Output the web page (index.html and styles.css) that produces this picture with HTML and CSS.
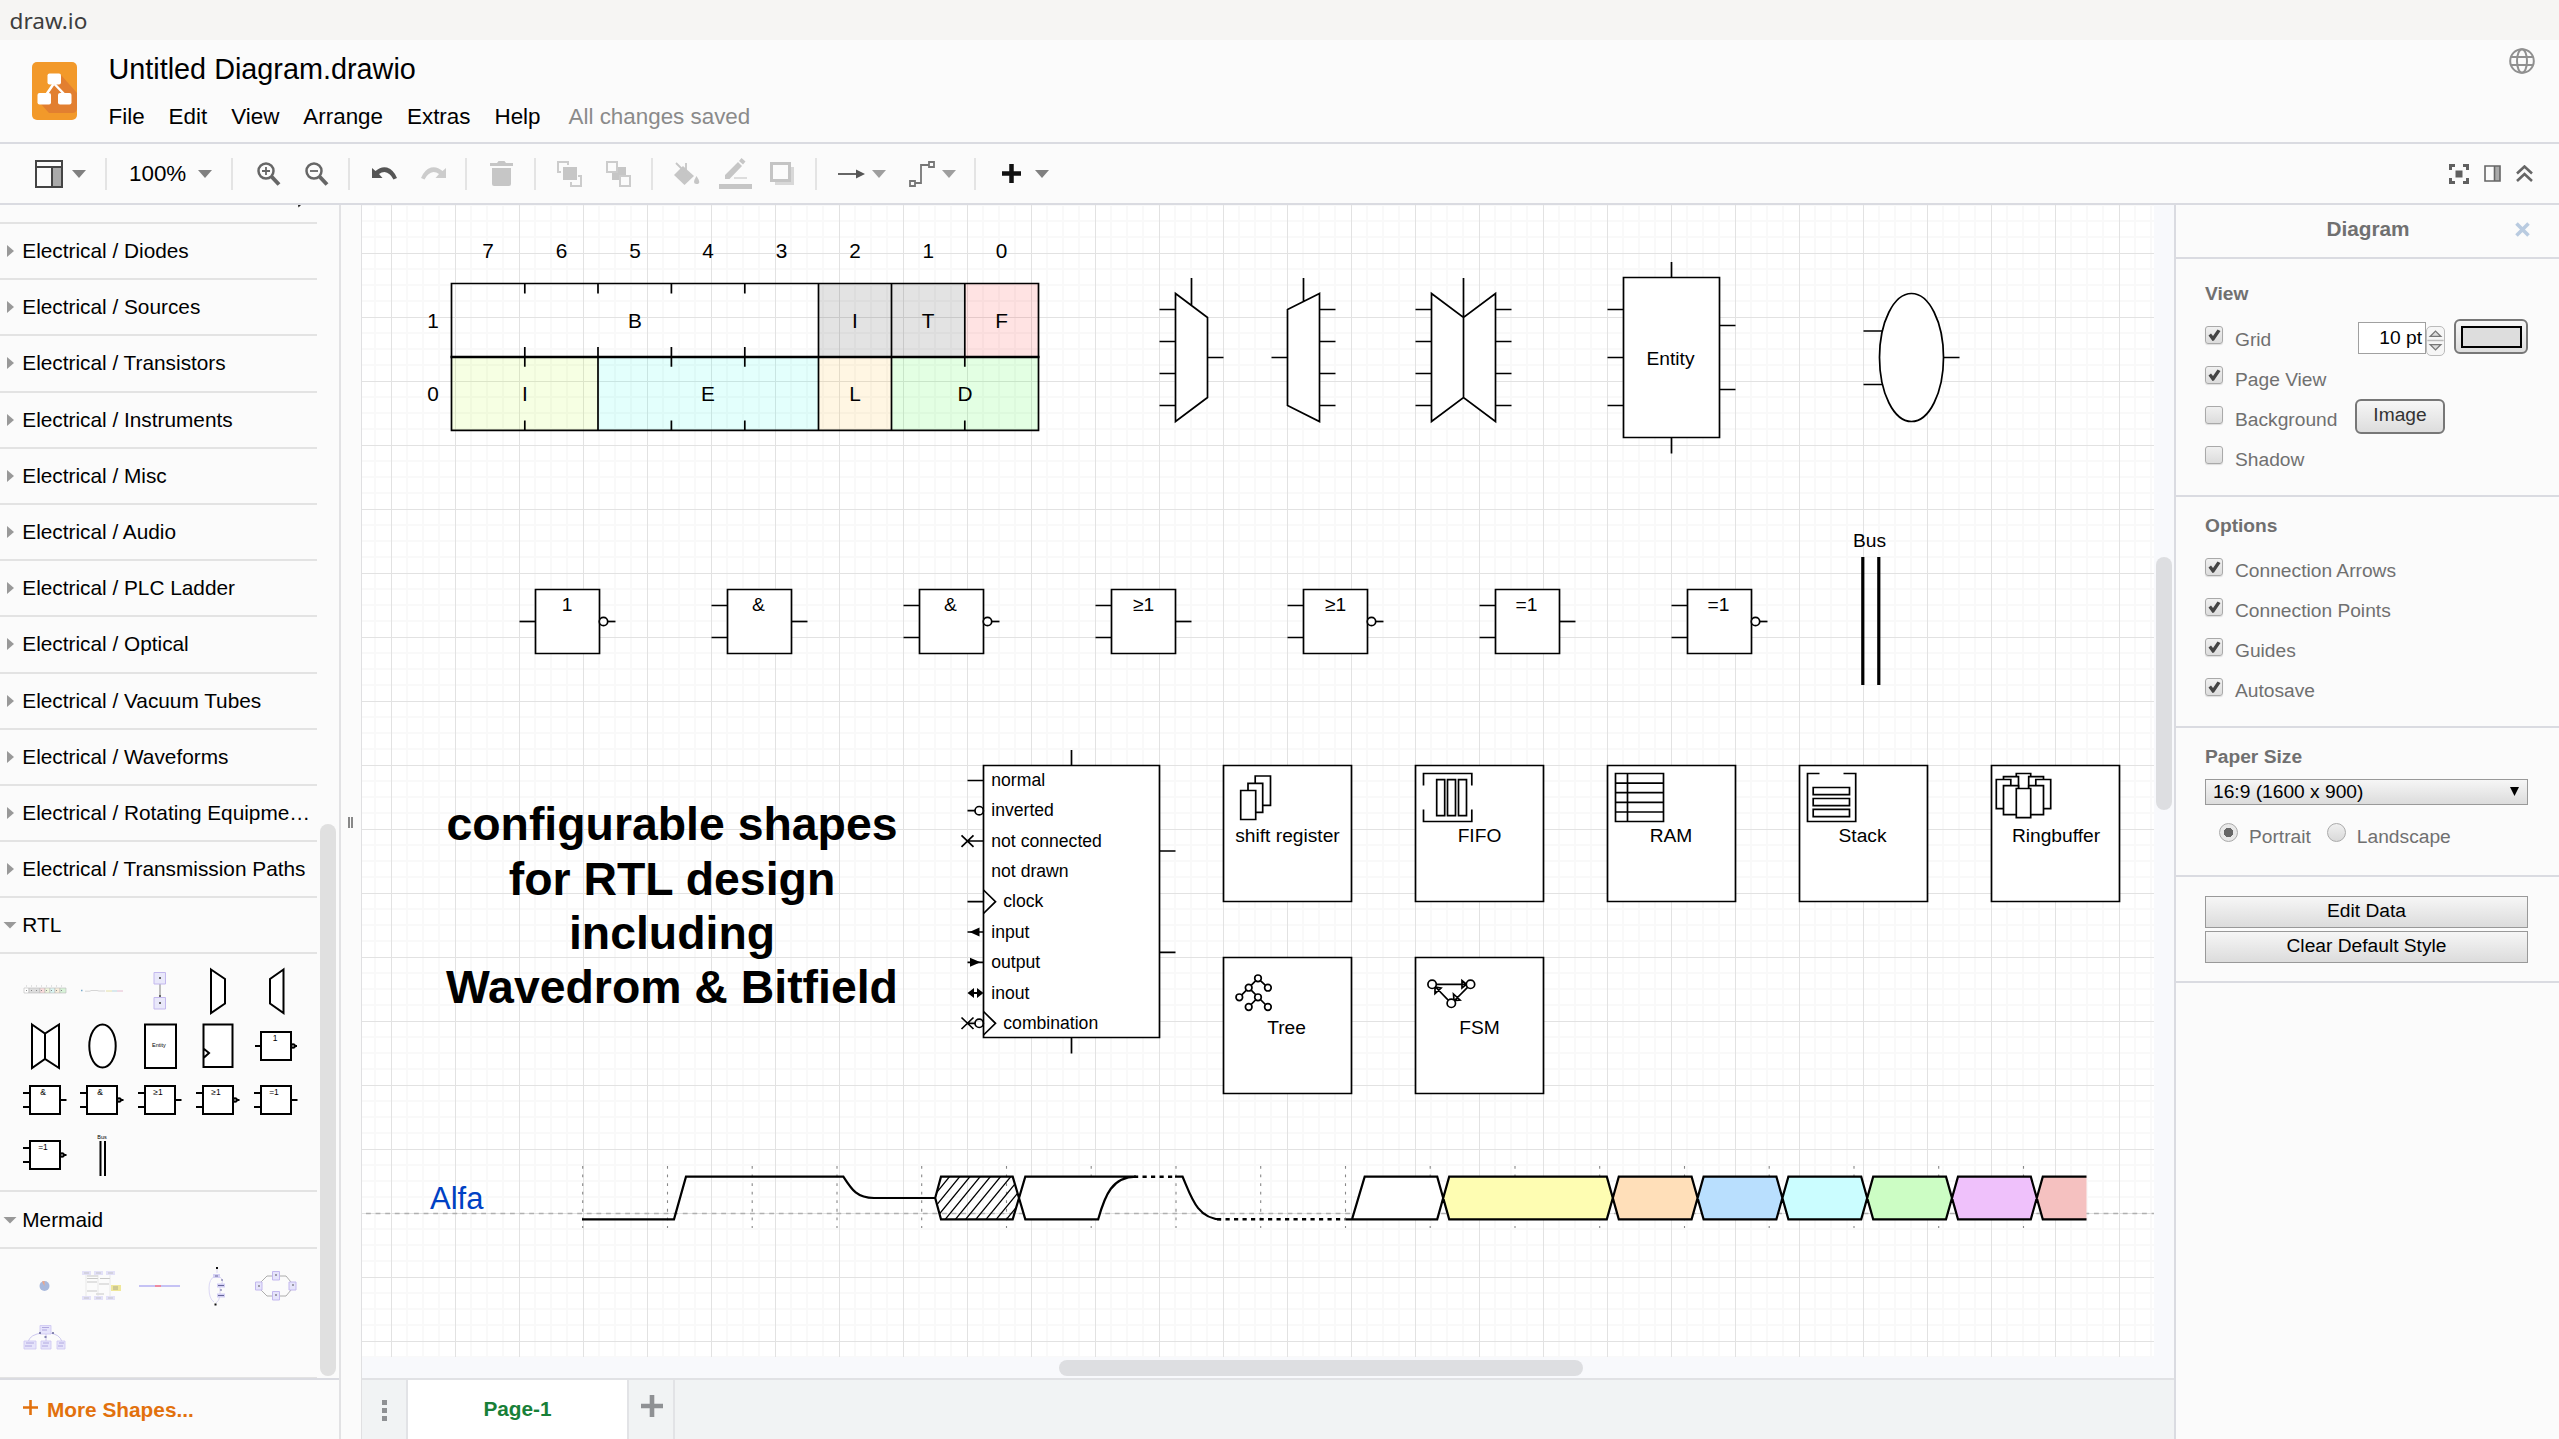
FILE: index.html
```html
<!DOCTYPE html>
<html lang="en">
<head>
<meta charset="utf-8">
<title>draw.io</title>
<link rel="stylesheet" href="styles.css">
</head>
<body>
<svg class="defs" aria-hidden="true">
  <symbol id="check" viewBox="0 0 18 18"><path d="M3.500 9.500L6 7.500L8 10L12.500 3.500L15.500 5L9 14.500L7.500 15Z" fill="#444"/></symbol>
  <symbol id="caret" viewBox="0 0 14 8"><path d="M0 0H14L7 8Z" fill="#808080"/></symbol>
  <symbol id="right" viewBox="0 0 16 12"><path d="M5 0L12 6L5 12Z" fill="#999"/></symbol>
  <symbol id="down" viewBox="0 0 16 12"><path d="M1.500 3H14.500L8 9.500Z" fill="#999"/></symbol>
</svg>

<div class="app">
  <div class="titlebar">draw.io</div>

  <header class="header">
    <svg class="logo" viewBox="0 0 45 58">
      <rect width="45" height="58" rx="5" fill="#f2992a"/>
      <path d="M29 13L45 31V46Q45 51 40 51H17L9 42L22 22Z" fill="#e27f30"/>
      <path d="M21.500 22L14 33M22.500 22L33 33" stroke="#fff" stroke-width="2.500"/>
      <rect x="15.500" y="11.500" width="13.500" height="11" rx="2" fill="#fff"/>
      <rect x="5.500" y="31" width="13.500" height="11.500" rx="2" fill="#fff"/>
      <rect x="26" y="31" width="13.500" height="11.500" rx="2" fill="#fff"/>
    </svg>
    <div class="heading">
      <div class="filename">Untitled Diagram.drawio</div>
      <nav class="menu"><span>File</span><span>Edit</span><span>View</span><span>Arrange</span><span>Extras</span><span>Help</span><span class="status">All changes saved</span></nav>
    </div>
    <svg class="globe" viewBox="0 0 26 26" fill="none" stroke="#909090" stroke-width="2">
      <circle cx="13" cy="13" r="11.800"/><ellipse cx="13" cy="13" rx="5" ry="11.800"/><path d="M2 9H24M2 17H24"/>
    </svg>
  </header>

  <div class="toolbar">
    <div class="group g-format">
      <svg width="28" height="28" viewBox="0 0 28 28"><path d="M18 8H27V27H18Z" fill="#aaa"/><path d="M1 1H27V27H1ZM1 7H27M17 7V27" fill="none" stroke="#444" stroke-width="2"/></svg>
      <svg class="caret"><use href="#caret"/></svg>
    </div>
    <div class="group g-zoom"><span class="percent">100%</span><svg class="caret"><use href="#caret"/></svg></div>
    <div class="group g-mag">
      <svg width="24" height="24" viewBox="0 0 24 24" fill="none" stroke="#666"><circle cx="9" cy="9" r="7.500" stroke-width="2.500"/><path d="M9 5V13M5 9H13" stroke-width="1.800"/><path d="M14 14L22 22.500" stroke-width="4"/></svg>
      <svg width="24" height="24" viewBox="0 0 24 24" fill="none" stroke="#666"><circle cx="9" cy="9" r="7.500" stroke-width="2.500"/><path d="M5 9H13" stroke-width="1.800"/><path d="M14 14L22 22.500" stroke-width="4"/></svg>
    </div>
    <div class="group g-undo">
      <svg width="25" height="16" viewBox="0 0 25 16"><path d="M0 2L3.500 5Q9 0 15 1.500Q22 4 25 12L21.500 13.500Q18 6.500 12.500 6Q9.500 6 7 8L10.500 12H0Z" fill="#555"/></svg>
      <svg width="25" height="16" viewBox="0 0 25 16"><path d="M25 2L21.500 5Q16 0 10 1.500Q3 4 0 12L3.500 13.500Q7 6.500 12.500 6Q15.500 6 18 8L14.500 12H25Z" fill="#ccc"/></svg>
    </div>
    <div class="group g-trash"><svg width="23" height="25" viewBox="0 0 23 25"><path d="M0 2H7L8.500 0H14.500L16 2H23V5H0ZM2 7H21V23Q21 25 19 25H4Q2 25 2 23Z" fill="#c6c6c6"/></svg></div>
    <div class="group g-order">
      <svg width="25" height="26" viewBox="0 0 25 26"><path d="M6 6H20V19H6Z" fill="#c6c6c6"/><path d="M4 11H1V1H11V4M21 15H24V25H14V21" fill="none" stroke="#ccc" stroke-width="2"/></svg>
      <svg width="25" height="26" viewBox="0 0 25 26"><path d="M6 6H20V19H6Z" fill="#c6c6c6"/><path d="M1 1H11V11H1ZM14 15H24V25H14Z" fill="#fbfbfb" stroke="#ccc" stroke-width="2"/></svg>
    </div>
    <div class="group g-style">
      <svg width="26" height="26" viewBox="0 0 26 26"><path d="M9 5L20 15L10.500 24L0 14Z" fill="#c6c6c6"/><path d="M2 2L12 12V2" fill="none" stroke="#c6c6c6" stroke-width="1.800"/><path d="M22.500 15Q28 23 22.500 23Q17.500 23 22.500 15Z" fill="#c6c6c6"/></svg>
      <svg class="pen" width="33" height="31" viewBox="0 0 33 31"><path d="M0 26H33V31H0Z" fill="#c6c6c6"/><path d="M6 21V17L19 4L23 8L10.500 21ZM20 3L22.500 0L26.500 3.500L24 6.500Z" fill="#c6c6c6"/><path d="M15 20H28" stroke="#ddd" stroke-width="2"/></svg>
      <svg width="24" height="24" viewBox="0 0 24 24"><path d="M5 5H24V23H5Z" fill="#d8d8d8"/><rect x="1.500" y="1.500" width="18" height="17" fill="#fbfbfb" stroke="#c4c4c4" stroke-width="3"/></svg>
    </div>
    <div class="group g-conn">
      <svg width="28" height="14" viewBox="0 0 28 14"><path d="M1 7H20" stroke="#666" stroke-width="2"/><path d="M19 2.500L28 7L19 11.500Z" fill="#555"/></svg>
      <svg class="caret light"><use href="#caret"/></svg>
      <svg class="way" width="26" height="26" viewBox="0 0 26 26"><path d="M1 20H6V25H1ZM20 1H25V6H20ZM6 22H12V4H20" fill="none" stroke="#777" stroke-width="1.800"/></svg>
      <svg class="caret light"><use href="#caret"/></svg>
    </div>
    <div class="group g-add">
      <svg width="21" height="21" viewBox="0 0 21 21"><path d="M10.500 1V20M1 10.500H20" stroke="#111" stroke-width="4.500"/></svg>
      <svg class="caret"><use href="#caret"/></svg>
    </div>
    <div class="group g-right">
      <svg width="20" height="20" viewBox="0 0 20 20"><path d="M1.500 6V1.500H6M14 1.500H18.500V6M18.500 14V18.500H14M6 18.500H1.500V14" fill="none" stroke="#606060" stroke-width="3"/><path d="M6.500 6.500H13.500V13.500H6.500Z" fill="#606060"/></svg>
      <svg width="17" height="17" viewBox="0 0 17 17"><path d="M11 1H16V16H11Z" fill="#aaa"/><path d="M1 1H16V16H1ZM10.500 1V16" fill="none" stroke="#666" stroke-width="1.600"/></svg>
      <svg width="17" height="17" viewBox="0 0 17 17"><path d="M1 8.500L8.500 1.500L16 8.500M1 16L8.500 9L16 16" fill="none" stroke="#666" stroke-width="2.600"/></svg>
    </div>
  </div>

  <div class="workspace">
    <aside class="sidebar">
      <div class="shapes">
        <div class="palettes">
          <div class="palette cut"><svg width="4" height="3" viewBox="0 0 4 3"><path d="M1 0H4L1.500 2.500Z" fill="#222"/></svg></div>
          <div class="palette"><svg><use href="#right"/></svg>Electrical / Diodes</div>
          <div class="palette"><svg><use href="#right"/></svg>Electrical / Sources</div>
          <div class="palette"><svg><use href="#right"/></svg>Electrical / Transistors</div>
          <div class="palette"><svg><use href="#right"/></svg>Electrical / Instruments</div>
          <div class="palette"><svg><use href="#right"/></svg>Electrical / Misc</div>
          <div class="palette"><svg><use href="#right"/></svg>Electrical / Audio</div>
          <div class="palette"><svg><use href="#right"/></svg>Electrical / PLC Ladder</div>
          <div class="palette"><svg><use href="#right"/></svg>Electrical / Optical</div>
          <div class="palette"><svg><use href="#right"/></svg>Electrical / Vacuum Tubes</div>
          <div class="palette"><svg><use href="#right"/></svg>Electrical / Waveforms</div>
          <div class="palette"><svg><use href="#right"/></svg>Electrical / Rotating Equipme…</div>
          <div class="palette"><svg><use href="#right"/></svg>Electrical / Transmission Paths</div>
          <div class="palette"><svg><use href="#down"/></svg>RTL</div>
          <div class="thumbs rtl">
            <svg viewBox="0 0 58 54"><g stroke="#bbb" stroke-width=".6"><path d="M8 24H13V29H8Z" fill="#fff"/><path d="M13 24H24V29H13Z" fill="#ddd"/><path d="M24 24H29V29H24Z" fill="#fbdcdc"/><path d="M29 24H34V29H29Z" fill="#eef6dc"/><path d="M34 24H39V29H34Z" fill="#dcf6f3"/><path d="M39 24H44V29H39Z" fill="#f9eedc"/><path d="M44 24H50V29H44Z" fill="#d8f3d8"/></g><path d="M10 22H50" stroke="#bbb" stroke-width=".8" stroke-dasharray="1 4"/><path d="M10 26.500H50" stroke="#888" stroke-dasharray="1 4"/></svg>
            <svg viewBox="0 0 58 54"><path d="M8 26.500H9.500" stroke="#7ac" stroke-width="1.300"/><path d="M12 27.200H17L18 26.500H24L26 27H32" stroke="#d0d0d0" stroke-width=".9" fill="none"/><path d="M33 27H39" stroke="#e4e0a8"/><path d="M39 27H44" stroke="#b5d5df"/><path d="M44 27H50" stroke="#e5bcd0"/></svg>
            <svg viewBox="0 0 58 54"><path d="M29 20V34" stroke="#aaa" stroke-width="1.500"/><path d="M23 8.500H34.500V20H23ZM23 33.500H34.500V45H23Z" fill="#e9e8fa" stroke="#c3b8ee"/><path d="M28 14H30M28 39H30M28 32H30" stroke="#666" stroke-width="2"/></svg>
            <svg viewBox="0 0 58 54"><path d="M22 5.500L36 15V39.500L22 49Z" class="tk"/></svg>
            <svg viewBox="0 0 58 54"><path d="M36.500 5.500L23 15V39.500L36.500 49Z" class="tk"/></svg>
            <svg viewBox="0 0 58 54"><path d="M16 5.500L29 14.500L43 5.500V49L29 40L16 49ZM29 14.500V40" class="tk"/></svg>
            <svg viewBox="0 0 58 54"><ellipse cx="29.500" cy="27" rx="13.200" ry="21.500" class="tk"/></svg>
            <svg viewBox="0 0 58 54"><path d="M14 5.500H45V49H14Z" class="tk"/><text x="28" y="27.500" class="tt tiny">Entity</text></svg>
            <svg viewBox="0 0 58 54"><path d="M14.500 5.500H43.500V48H14.500ZM14.500 29.500L20 34L14.500 39" class="tk"/></svg>
            <svg viewBox="0 0 58 54"><path d="M14 13H44V41H14ZM8 27H14M44 27H50" class="tk"/><circle cx="46" cy="27" r="1.800" class="tk"/><text x="28" y="21.500" class="tt">1</text></svg>
            <svg viewBox="0 0 58 54"><path d="M14 13H44V41H14ZM7 20H14M7 34H14M44 27H50.500" class="tk"/><text x="27" y="21.500" class="tt">&amp;</text></svg>
            <svg viewBox="0 0 58 54"><path d="M14 13H44V41H14ZM7 20H14M7 34H14M44 27H50.500" class="tk"/><circle cx="46" cy="27" r="1.800" class="tk"/><text x="27" y="21.500" class="tt">&amp;</text></svg>
            <svg viewBox="0 0 58 54"><path d="M14 13H44V41H14ZM7 20H14M7 34H14M44 27H50.500" class="tk"/><text x="27" y="21.500" class="tt">≥1</text></svg>
            <svg viewBox="0 0 58 54"><path d="M14 13H44V41H14ZM7 20H14M7 34H14M44 27H50.500" class="tk"/><circle cx="46" cy="27" r="1.800" class="tk"/><text x="27" y="21.500" class="tt">≥1</text></svg>
            <svg viewBox="0 0 58 54"><path d="M14 13H44V41H14ZM7 20H14M7 34H14M44 27H50.500" class="tk"/><text x="27" y="21.500" class="tt">=1</text></svg>
            <svg viewBox="0 0 58 54"><path d="M14 13H44V41H14ZM7 20H14M7 34H14M44 27H50.500" class="tk"/><circle cx="46" cy="27" r="1.800" class="tk"/><text x="27" y="21.500" class="tt">=1</text></svg>
            <svg viewBox="0 0 58 54"><path d="M27.500 13V48M32 13V48" class="tk"/><text x="29" y="10.500" class="tt tiny">Bus</text></svg>
          </div>
          <div class="palette"><svg><use href="#down"/></svg>Mermaid</div>
          <div class="thumbs mermaid">
            <svg viewBox="0 0 58 54"><circle cx="28.500" cy="27" r="5" fill="#a9b9dc"/><path d="M28.500 27L26 22.500L28.500 22Z" fill="#f3a683"/></svg>
            <svg viewBox="0 0 58 54"><path d="M9 14H18M21 14H30M33 14H42M9 39H18M21 39H30M33 39H42" stroke="#e3e1f8" stroke-width="4"/><path d="M11 14H16M23 14H28M35 14H40M11 39H16M23 39H28M35 39H40M14 17H25M14 19.500H25M27 19.500H37M14 23H24M26 25H36M14 32H24M23 35H31" stroke="#bbb" stroke-width=".8"/><path d="M13 16V37M25 16V37M37 16V37" stroke="#ddd" stroke-width=".6"/><path d="M38 26H48V32H38Z" fill="#efe79a"/><path d="M40 28H45M40 30H45" stroke="#998" stroke-width=".8"/></svg>
            <svg viewBox="0 0 58 54"><path d="M8 27H24M30 27H49" stroke="#b4b0f2" stroke-width="1.600"/><path d="M24 27H30" stroke="#ee8aa0" stroke-width="2"/></svg>
            <svg viewBox="0 0 58 54"><path d="M28 10V14M26 17Q20 20 20 29Q20 40 25 43M31 18Q36 22 31 27V37Q30 42 27 44" stroke="#dcd8f5" fill="none"/><path d="M24 17H31M28 26.500H36M28 36.500H36" stroke="#d3cff4" stroke-width="4"/><path d="M27 9H29M25.500 45.500H27.500" stroke="#111" stroke-width="2"/><path d="M26 17H29M29 26.500H35M29 36.500H35M32 21H34M31 31H33" stroke="#669"/></svg>
            <svg viewBox="0 0 58 54"><path d="M14 23L20 17H39L44 23M14 31L20 37H39L44 31" stroke="#999" fill="none" stroke-width=".8"/><path d="M25.500 12.500H32.500V21H25.500ZM25.500 32.500H32.500V41H25.500ZM8.500 23H15V31H8.500ZM42 23H49V31H42Z" fill="#e6e4fb" stroke="#c3b8ee"/><path d="M28 16H30M28 36H30M11 27H13M45 26H47" stroke="#555"/></svg>
            <svg viewBox="0 0 58 54"><path d="M27 20Q14 21 12 29M30 20V29M33 20Q44 21 46 29" stroke="#cdc8f0" fill="none"/><path d="M24 12.500H35V21H24ZM8 28H20V36H8ZM25 28H35V36H25ZM41 28H49V36H41Z" fill="#e6e4fb" stroke="#cdc5f2" stroke-width=".8"/><path d="M26 14.500H33M26 17H31M10 30H18M9 33H16M27 30H33M26 33H32M43 30H48M42 33H47" stroke="#aaa0dd" stroke-width=".9"/><path d="M23 20H25M28.500 24H30.500M36 20H38" stroke="#669" stroke-width="1.500"/></svg>
          </div>
        </div>
        <div class="scrolltrack"><div class="thumb-v left-thumb"></div></div>
      </div>
      <div class="more"><svg width="15" height="15" viewBox="0 0 15 15"><path d="M7.500 0V15M0 7.500H15" stroke="#e2710d" stroke-width="2.600"/></svg>More Shapes...</div>
    </aside>

    <div class="splitter"><i></i><i></i></div>

    <main class="editor">
      <div class="viewport">
        <svg class="canvas" viewBox="362 205 1792 1152" width="1792" height="1152">
          <defs>
            <pattern id="grid" x="391" y="253" width="64" height="64" patternUnits="userSpaceOnUse">
              <path d="M15 0h2v64h-2zM31 0h2v64h-2zM47 0h2v64h-2zM0 15h64v2H0zM0 31h64v2H0zM0 47h64v2H0z" fill="#f9f9f9"/>
              <path d="M0 0h64v1H0zM0 0h1v64H0z" fill="#e2e2e2"/>
            </pattern>
            <clipPath id="hex"><path d="M935.200 1198L941 1176.700H1012.700L1019.600 1198L1012.700 1219.300H941Z"/></clipPath>
            <g id="box"><path class="s" d="M0 0H64V64H0Z"/></g>
            <g id="in2"><path class="s" d="M-16 16H0M-16 48H0"/></g>
            <g id="out"><path class="s" d="M64 32H80"/></g>
            <g id="nout"><path class="s" d="M72 32H80"/><circle class="s" cx="68" cy="32" r="4.200"/></g>
            <g id="mem"><path class="s" d="M0 0H128V136H0Z"/></g>
          </defs>
          <rect x="362" y="205" width="1792" height="1152" fill="#fff"/>
          <rect x="362" y="205" width="1792" height="1152" fill="url(#grid)"/>
          <path d="M366 1213.500H2154" stroke="#b0b0b0" stroke-width="1.400" stroke-dasharray="4.800 4.800"/>

          <!-- bit field -->
          <path d="M818 283.500H964.800V357H818Z" fill="#000" opacity=".11"/>
          <path d="M964.800 283.500H1038.400V357H964.800Z" fill="#f00" opacity=".11"/>
          <path d="M451.200 357H598V430.300H451.200Z" fill="#af0" opacity=".11"/>
          <path d="M598 357H818V430.300H598Z" fill="#00ffe1" opacity=".11"/>
          <path d="M818 357H891.500V430.300H818Z" fill="#fa0" opacity=".11"/>
          <path d="M891.500 357H1038.400V430.300H891.500Z" fill="#0f0" opacity=".11"/>
          <path class="n" d="M451.500 283.500H1038.500V430.300H451.500ZM818.500 283.500V430.300M891.500 283.500V430.300M964.800 283.500V357M598 357V430.300M524.800 283.500V293.500M598 283.500V293.500M671.400 283.500V293.500M744.800 283.500V293.500M524.800 347V366.700M598 347V357M671.400 347V366.700M744.800 347V366.700M524.800 420.500V430M671.400 420.500V430M744.800 420.500V430M964.800 357V366.700M964.800 420.500V430"/>
          <path class="n" stroke-width="2.400" d="M450.500 357H1039.500"/>
          <g class="bits">
            <text x="488" y="258">7</text><text x="561.500" y="258">6</text><text x="635" y="258">5</text><text x="708" y="258">4</text><text x="781.500" y="258">3</text><text x="855" y="258">2</text><text x="928.200" y="258">1</text><text x="1001.600" y="258">0</text>
            <text x="433" y="328">1</text><text x="433" y="401">0</text>
            <text x="635" y="328">B</text><text x="855" y="328">I</text><text x="928.200" y="328">T</text><text x="1001.600" y="328">F</text>
            <text x="525" y="401">I</text><text x="708" y="401">E</text><text x="855" y="401">L</text><text x="965" y="401">D</text>
          </g>

          <!-- multiplexers, entity, cloud -->
          <path class="s" d="M1175.500 293.500L1207.500 317.500V397.500L1175.500 421.500ZM1159.500 309.500H1175.500M1159.500 341.500H1175.500M1159.500 373.500H1175.500M1159.500 405.500H1175.500M1191.500 278V305.500M1207.500 357.500H1223.500"/>
          <path class="s" d="M1319.500 293.500L1287.500 309.500V405.500L1319.500 421.500ZM1319.500 309.500H1335.500M1319.500 341.500H1335.500M1319.500 373.500H1335.500M1319.500 405.500H1335.500M1303.500 278V301.500M1271.500 357.500H1287.500"/>
          <path class="s" d="M1431.500 293.500L1463.500 317.500L1495.500 293.500V421.500L1463.500 397.500L1431.500 421.500ZM1463.500 278V397.500M1415.500 309.500H1431.500M1415.500 341.500H1431.500M1415.500 373.500H1431.500M1415.500 405.500H1431.500M1495.500 309.500H1511.500M1495.500 341.500H1511.500M1495.500 373.500H1511.500M1495.500 405.500H1511.500"/>
          <path class="s" d="M1623.500 277.500H1719.500V437.500H1623.500ZM1671.500 262V277.500M1671.500 437.500V453.500M1607.500 309.500H1623.500M1607.500 357.500H1623.500M1607.500 405.500H1623.500M1719.500 325.500H1735.500M1719.500 389.500H1735.500"/>
          <text class="m" x="1670.500" y="365">Entity</text>
          <path class="s" d="M1863.500 331H1884M1863.500 384.500H1884M1943.500 357.500H1959.500"/>
          <ellipse class="s" cx="1911.500" cy="357.500" rx="32" ry="64"/>

          <!-- logic gates -->
          <g transform="translate(535.500 589.500)"><use href="#box"/><path class="s" d="M-16 32H0"/><use href="#nout"/><text class="m" x="31.500" y="21.500">1</text></g>
          <g transform="translate(727.500 589.500)"><use href="#box"/><use href="#in2"/><use href="#out"/><text class="m" x="31" y="21.500">&amp;</text></g>
          <g transform="translate(919.500 589.500)"><use href="#box"/><use href="#in2"/><use href="#nout"/><text class="m" x="31" y="21.500">&amp;</text></g>
          <g transform="translate(1111.500 589.500)"><use href="#box"/><use href="#in2"/><use href="#out"/><text class="m" x="32" y="21.500">≥1</text></g>
          <g transform="translate(1303.500 589.500)"><use href="#box"/><use href="#in2"/><use href="#nout"/><text class="m" x="32" y="21.500">≥1</text></g>
          <g transform="translate(1495.500 589.500)"><use href="#box"/><use href="#in2"/><use href="#out"/><text class="m" x="31" y="21.500">=1</text></g>
          <g transform="translate(1687.500 589.500)"><use href="#box"/><use href="#in2"/><use href="#nout"/><text class="m" x="31" y="21.500">=1</text></g>
          <text class="m" x="1869.500" y="547">Bus</text>
          <path class="n" stroke-width="3.200" d="M1862.800 557V685M1878.800 557V685"/>

          <!-- caption -->
          <g class="caption"><text x="672" y="840">configurable shapes</text><text x="672" y="895">for RTL design</text><text x="672" y="949">including</text><text x="672" y="1003">Wavedrom &amp; Bitfield</text></g>

          <!-- pin styles -->
          <path class="s" d="M983.500 765.500H1159.500V1037.500H983.500ZM1071.500 750V765.500M1071.500 1037.500V1053.500M1159.500 851H1175.500M1159.500 952.300H1175.500"/>
          <path class="n" d="M967.500 780.500H983.500M967.500 810.700H975M961.500 835.300L973.500 846.800M973.500 835.300L961.500 846.800M967 841H983.500M967.500 901.700H983.500M983.500 890L995.500 901.700L983.500 913.500M967.500 932H983.500M967.500 962.300H983.500M961.500 1017.500L973.500 1029M973.500 1017.500L961.500 1029M967 1023.300H975M983.500 1011.500L995.500 1023.300L983.500 1035"/>
          <circle class="n" cx="979.200" cy="810.700" r="4.200"/><circle class="n" cx="979.200" cy="1023.300" r="4.200"/>
          <path d="M969.500 932L979.500 927.500V936.500ZM970 957.800V966.800L980.500 962.300ZM967.500 993L974 988V998ZM983.500 993L977 988V998ZM974 992H977V994H974Z"/>
          <g class="pins">
            <text x="991.300" y="786.300">normal</text><text x="991.300" y="816.300">inverted</text><text x="991.300" y="847">not connected</text><text x="991.300" y="877">not drawn</text><text x="1003.300" y="907.300">clock</text><text x="991.300" y="938">input</text><text x="991.300" y="968">output</text><text x="991.300" y="999">inout</text><text x="1003.300" y="1029">combination</text>
          </g>

          <!-- memories -->
          <use href="#mem" x="1223.500" y="765.500"/><use href="#mem" x="1415.500" y="765.500"/><use href="#mem" x="1607.500" y="765.500"/><use href="#mem" x="1799.500" y="765.500"/><use href="#mem" x="1991.500" y="765.500"/><use href="#mem" x="1223.500" y="957.500"/><use href="#mem" x="1415.500" y="957.500"/>
          <text class="m" x="1287.500" y="842">shift register</text><text class="m" x="1479.500" y="842">FIFO</text><text class="m" x="1671" y="842">RAM</text><text class="m" x="1862.500" y="842">Stack</text><text class="m" x="2056" y="842">Ringbuffer</text><text class="m" x="1286.500" y="1034">Tree</text><text class="m" x="1479.500" y="1034">FSM</text>
          <path class="s" d="M1255.200 776H1270.500V805.300H1255.200Z"/><path class="s" d="M1248 783.300H1262.700V812.300H1248Z"/><path class="s" d="M1240.700 790.500H1255.700V819.500H1240.700Z"/>
          <path class="n" d="M1423.500 785.500V773.500H1471.800V785.500M1423.500 809.500V821.500H1471.800V809.500M1436.700 779.700H1444.700V815.700H1436.700ZM1447.500 779.700H1455.500V815.700H1447.500ZM1458.500 779.700H1466.500V815.700H1458.500Z"/>
          <path class="n" d="M1615.500 773.500H1663.500V821.500H1615.500ZM1627.500 773.500V821.500M1615.500 783.200H1663.500M1615.500 792.700H1663.500M1615.500 802.300H1663.500M1615.500 812H1663.500"/>
          <path class="n" d="M1819.500 773.500H1807.500V821.500H1855.700V773.500H1843.500M1813.200 787.500H1849.500V794.700H1813.200ZM1813.200 798.500H1849.500V805.700H1813.200ZM1813.200 809.300H1849.500V816.700H1813.200Z"/>
          <path class="s" d="M2016.300 773.500H2030.700V802.700H2016.300Z"/><path class="s" d="M2003.500 776.700H2018.500V806H2003.500ZM2028.700 776.700H2043.500V806H2028.700Z"/><path class="s" d="M1996.300 779.500H2010.800V808.700H1996.300ZM2035.800 779.500H2050.700V808.700H2035.800Z"/><path class="s" d="M2003.500 785.700H2018.500V814.700H2003.500ZM2028.700 785.700H2043.500V814.700H2028.700Z"/><path class="s" d="M2016.300 788.500H2030.700V817.700H2016.300Z"/>
          <path class="n" d="M1258 978.300L1239.300 997.300M1258 978.300L1267.900 987.700M1248.700 987.700L1267.900 1007M1258 997.300L1248.700 1007"/>
          <g class="s"><circle cx="1258" cy="978.300" r="3.300"/><circle cx="1248.700" cy="987.700" r="3.300"/><circle cx="1267.900" cy="987.700" r="3.300"/><circle cx="1239.300" cy="997.300" r="3.300"/><circle cx="1258" cy="997.300" r="3.300"/><circle cx="1248.700" cy="1007" r="3.300"/><circle cx="1267.900" cy="1007" r="3.300"/></g>
          <path class="n" d="M1432 984.300H1466M1470.500 984.300L1455 1000M1451.300 1003.300L1436 987.500M1462 980.500V988L1466.500 984.300ZM1453.500 994L1460 1000L1454 1000.500ZM1435 993.500L1441 988L1435 987Z"/>
          <g class="s"><circle cx="1432.100" cy="984.300" r="4.200"/><circle cx="1470.500" cy="984.300" r="4.200"/><circle cx="1451.300" cy="1003.300" r="4.200"/></g>

          <!-- timing diagram -->
          <path d="M582.700 1166V1228M667.500 1166V1228M752.200 1166V1228M837 1166V1228M921.700 1166V1228M1006.500 1166V1228M1091.200 1166V1228M1176 1166V1228M1260.700 1166V1228M1345.500 1166V1228M1430.200 1166V1228M1515 1166V1228M1599.700 1166V1228M1684.500 1166V1228M1769.200 1166V1228M1854 1166V1228M1938.700 1166V1228M2023.500 1166V1228" stroke="#888" stroke-width="1.100" stroke-dasharray="2.800 5.770"/>
          <text x="430" y="1209" font-size="31" fill="#0041c4">Alfa</text>
          <g fill="#fff">
            <path d="M1019.600 1198L1025.300 1176.700H1136Q1116 1177 1107 1196Q1103 1206 1098 1219.300H1025.300Z"/>
            <path d="M1352 1219.300L1364.700 1176.700H1437.200L1443.200 1198L1437.200 1219.300Z"/>
            <path d="M1443.200 1198L1449.200 1176.700H1606.800L1612.800 1198L1606.800 1219.300H1449.200Z" fill="#fefdb2"/>
            <path d="M1612.800 1198L1618.800 1176.700H1691.600L1697.600 1198L1691.600 1219.300H1618.800Z" fill="#ffdfb9"/>
            <path d="M1697.600 1198L1703.600 1176.700H1776.400L1782.400 1198L1776.400 1219.300H1703.600Z" fill="#b9dffe"/>
            <path d="M1782.400 1198L1788.400 1176.700H1861.200L1867.200 1198L1861.200 1219.300H1788.400Z" fill="#cbfdff"/>
            <path d="M1867.200 1198L1873.200 1176.700H1946L1952 1198L1946 1219.300H1873.200Z" fill="#ccfdc4"/>
            <path d="M1952 1198L1958 1176.700H2030.800L2036.800 1198L2030.800 1219.300H1958Z" fill="#efc1fb"/>
            <path d="M2036.800 1198L2042.800 1176.700H2086.500V1219.300H2042.800Z" fill="#f5c1c0"/>
          </g>
          <path clip-path="url(#hex)" class="n" stroke-width="1.300" d="M910 1225L955 1170M920.200 1225L965.200 1170M930.400 1225L975.400 1170M940.600 1225L985.600 1170M950.800 1225L995.800 1170M961 1225L1006 1170M971.200 1225L1016.200 1170M981.400 1225L1026.400 1170M991.600 1225L1036.600 1170M1001.800 1225L1046.800 1170M899.800 1225L944.800 1170"/>
          <path class="n" stroke-width="2.200" d="M582 1219.300H674L686 1176.700H843.400C852 1190 857 1198 874 1198H935.200L941 1176.700H1012.700L1025.300 1219.300H1098.200C1105 1195 1112 1177 1136 1176.700M935.200 1198L941 1219.300H1012.700L1025.300 1176.700H1136M1175 1176.700H1182.600C1191 1196 1197 1219 1221 1219.300M1345.500 1219.300H1352L1364.700 1176.700H1437.200L1449.200 1219.300H1606.800L1618.800 1176.700H1691.600L1703.600 1219.300H1776.400L1788.400 1176.700H1861.200L1873.200 1219.300H1946L1958 1176.700H2030.800L2042.800 1219.300H2086.500M1352 1219.300H1437.200L1449.200 1176.700H1606.800L1618.800 1219.300H1691.600L1703.600 1176.700H1776.400L1788.400 1219.300H1861.200L1873.200 1176.700H1946L1958 1219.300H2030.800L2042.800 1176.700H2086.500"/>
          <path class="n" stroke-width="2.400" stroke-dasharray="4.200 4.300" d="M1134 1176.700H1176M1217 1219.300H1345"/>
        </svg>
        <div class="vtrack"><div class="thumb-v canvas-thumb"></div></div>
        <div class="htrack"><div class="thumb-h"></div></div>
      </div>
      <div class="tabs">
        <div class="dots"><i></i><i></i><i></i></div>
        <div class="tab">Page-1</div>
        <div class="addtab"><svg width="22" height="22" viewBox="0 0 22 22"><path d="M11 0V22M0 11H22" stroke="#8f9194" stroke-width="4.600"/></svg></div>
      </div>
    </main>

    <aside class="format">
      <div class="format-title"><span>Diagram</span><svg width="15" height="15" viewBox="0 0 15 15"><path d="M1.500 1.500L13.500 13.500M13.500 1.500L1.500 13.500" stroke="#b9cbe0" stroke-width="3.600"/></svg></div>
      <section class="view">
        <h3>View</h3>
        <div class="row"><span class="cb"><svg><use href="#check"/></svg></span>Grid
          <span class="size">10 pt</span>
          <span class="spin"><svg viewBox="0 0 18 30"><path d="M3 10.500L9 4.500L15 10.500ZM3 19.500L9 25.500L15 19.500Z" fill="#ddd" stroke="#777" stroke-width="1.400"/><path d="M0 15H18" stroke="#bbb" stroke-width="1.600"/></svg></span>
          <span class="color"><i></i></span></div>
        <div class="row"><span class="cb"><svg><use href="#check"/></svg></span>Page View</div>
        <div class="row"><span class="cb"></span>Background<span class="imagebtn">Image</span></div>
        <div class="row"><span class="cb"></span>Shadow</div>
      </section>
      <section class="options">
        <h3>Options</h3>
        <div class="row"><span class="cb"><svg><use href="#check"/></svg></span>Connection Arrows</div>
        <div class="row"><span class="cb"><svg><use href="#check"/></svg></span>Connection Points</div>
        <div class="row"><span class="cb"><svg><use href="#check"/></svg></span>Guides</div>
        <div class="row"><span class="cb"><svg><use href="#check"/></svg></span>Autosave</div>
      </section>
      <section class="paper">
        <h3>Paper Size</h3>
        <div class="select"><span>16:9 (1600 x 900)</span><svg width="9" height="9" viewBox="0 0 9 9"><path d="M0 0H9L4.500 9Z"/></svg></div>
        <div class="row radios"><span class="radio on"></span><span class="portrait">Portrait</span><span class="radio"></span><span>Landscape</span></div>
      </section>
      <section class="actions"><div class="btn">Edit Data</div><div class="btn">Clear Default Style</div></section>
    </aside>
  </div>
</div>
</body>
</html>
```
FILE: styles.css
```css
* { box-sizing: border-box; }
body { margin: 0; background: #fbfbfb; font-family: "Liberation Sans", Arial, sans-serif; color: #000; overflow: hidden; }
svg { display: block; flex: none; }
.defs { display: none; }
.app { width: 2559px; height: 1439px; display: flex; flex-direction: column; }

.titlebar { height: 40px; background: #f6f5f3; padding-left: 9.500px; font: 22.600px/41px "Noto Sans", sans-serif; color: #3d3d3d; }

.header { height: 104px; border-bottom: 2px solid #dadbe1; display: flex; padding: 22px 24px 0 32px; }
.logo { width: 45px; height: 58px; }
.heading { margin-left: 31.500px; flex: 1; margin-top: -10px; }
.filename { font-size: 28.800px; line-height: 34px; }
.menu { display: flex; gap: 24px; font-size: 22.400px; line-height: 26px; margin-top: 18px; }
.status { color: #8a8a8a; margin-left: 4px; }
.globe { width: 26px; height: 26px; margin-top: -14px; }

.toolbar { height: 61px; border-bottom: 2px solid #dadbe1; display: flex; align-items: center; }
.group { height: 32px; display: flex; align-items: center; border-right: 2px solid #e4e4e4; }
.caret { width: 14px; height: 8px; }
.light { opacity: .75; }
.g-format { width: 107px; padding-left: 35px; gap: 9px; }
.g-zoom { width: 126px; padding-left: 22px; gap: 11.500px; }
.percent { font-size: 22.400px; line-height: 28px; width: 57px; padding-top: 1px; }
.g-mag { width: 117px; padding-left: 24px; gap: 24px; }
.g-undo { width: 117px; padding-left: 22px; gap: 24px; }
.g-trash { width: 69px; padding-left: 23px; }
.g-order { width: 117px; padding-left: 21px; gap: 24px; }
.g-style { width: 164px; padding-left: 21px; gap: 18.500px; }
.g-conn { width: 159px; padding-left: 20px; gap: 7px; }
.way { margin-left: 16px; }
.g-add { padding-left: 24.500px; gap: 13px; border: 0; }
.g-right { margin-left: auto; padding-right: 26px; gap: 15px; border: 0; }

.workspace { flex: 1; display: flex; min-height: 0; }
.sidebar { width: 341px; border-right: 2px solid #e2e2e4; display: flex; flex-direction: column; }
.shapes { height: 1175px; border-bottom: 2px solid #dadbe1; display: flex; overflow: hidden; }
.palettes { width: 317px; }
.palette { height: 56.200px; border-bottom: 2px solid #e3e3e3; display: flex; align-items: center; font-size: 20.800px; white-space: nowrap; padding-left: 1.500px; gap: 4.800px; }
.palette svg { width: 16px; height: 12px; }
.palette.cut { height: 19px; padding-left: 297px; align-items: flex-start; }
.palette.cut svg { width: 4px; height: 3px; }
.thumbs { display: grid; grid-template-columns: repeat(5, 57.800px); grid-auto-rows: 54.500px; padding-left: 15.500px; border-bottom: 2px solid #e3e3e3; }
.thumbs svg { width: 58px; height: 54px; }
.rtl { height: 238px; padding-top: 10px; }
.mermaid { height: 130px; padding-top: 10px; }
.tk { fill: #fff; stroke: #000; stroke-width: 2; }
.tt { font-size: 8.500px; text-anchor: middle; }
.tiny { font-size: 5.500px; }
.scrolltrack { flex: 1; padding: 619px 3px 0; }
.thumb-v { width: 16px; border-radius: 8px; background: #e0e0e0; }
.left-thumb { height: 552px; }
.more { flex: 1; display: flex; align-items: center; gap: 9px; padding-left: 23px; color: #e2710d; font-weight: bold; font-size: 20.800px; }
.more svg { margin-bottom: 5px; }

.splitter { width: 21px; border-right: 1px solid #e0e0e2; display: flex; gap: 1px; padding: 612px 0 0 7px; }
.splitter i { width: 2px; height: 11px; background: #888; }

.editor { width: 1812px; display: flex; flex-direction: column; }
.viewport { height: 1175px; border-bottom: 2px solid #e1e2e5; background: #f8f9fc; display: grid; grid-template: 1152px 21px / 1792px 20px; }
.canvas { grid-area: 1 / 1; }
.canvas .s { fill: #fff; stroke: #000; stroke-width: 1.700; }
.canvas .n { fill: none; stroke: #000; }
.canvas .n:not([stroke-width]) { stroke-width: 1.700; }
.canvas text { font-family: "Liberation Sans", Arial, sans-serif; }
.m { font-size: 19.200px; text-anchor: middle; }
.bits text { font-size: 20.800px; text-anchor: middle; }
.pins text { font-size: 17.600px; }
.caption text { font-size: 46.400px; font-weight: bold; text-anchor: middle; }
.vtrack { padding: 352px 2px 0; }
.canvas-thumb { height: 253px; background: #dddee1; }
.htrack { padding: 3px 0 0 697px; }
.thumb-h { width: 524px; height: 16px; border-radius: 8px; background: #dddee1; }
.tabs { flex: 1; background: #f1f3f4; display: flex; }
.dots { width: 46px; border-right: 2px solid #e2e3e6; display: flex; flex-direction: column; gap: 3px; align-items: center; padding: 20px 0 0 1px; }
.dots i { width: 5px; height: 5px; background: #8f9194; }
.tab { width: 219px; background: #fff; color: #188038; font-weight: bold; font-size: 20.800px; line-height: 57px; text-align: center; }
.addtab { width: 48px; border: solid #e2e3e6; border-width: 0 2px; padding: 15px 0 0 12px; }

.format { flex: 1; border-left: 2px solid #dadbe1; font-size: 19.200px; color: #707070; }
.format-title { height: 54px; border-bottom: 2px solid #dadbe1; display: flex; align-items: center; font-weight: bold; font-size: 20.800px; padding: 0 29px 3px 29px; }
.format-title span { flex: 1; text-align: center; padding: 0 0 1px 16px; }
section { border-bottom: 2px solid #dadbe1; padding: 18px 31px 0 29px; }
h3 { font-size: 19.200px; line-height: 22px; margin: 0 0 14px; }
.view { height: 238px; padding-top: 24px; }
.view h3 { margin-bottom: 15px; }
.view .cb { margin-bottom: 10px; }
.options { height: 231px; }
.paper { height: 149px; }
.paper h3 { margin-bottom: 11px; }
.row { height: 40px; display: flex; align-items: center; white-space: nowrap; }
.cb { width: 18px; height: 18px; margin: 0 12px 8px 0; border: 1.600px solid #a9a9a9; border-radius: 3px; background: linear-gradient(#f0f0f0, #dcdcdc); box-shadow: 0 1px 1px #ddd; }
.cb svg { width: 18px; height: 18px; margin: -1px; }
.size { width: 68px; height: 32px; margin: 0 0 4px auto; border: 1px solid #a0a0a0; background: #fff; color: #000; text-align: right; padding-right: 3px; line-height: 29px; }
.spin { width: 19px; height: 30px; margin-top: 1px; border: 1.600px solid #bbb; border-radius: 5px; background: #f6f6f6; }
.spin svg { width: 17px; height: 27px; }
.color { width: 74px; height: 35px; margin: 0 0 7px 9px; border: 2px solid #777; border-radius: 6px; background: linear-gradient(#f6f6f6, #ddd); padding: 5px; }
.color i { display: block; width: 61px; height: 22px; border: 2px solid #000; background: #ddd; }
.imagebtn { width: 90px; height: 35px; margin: 0 83px 7px auto; border: 2px solid #777; border-radius: 6px; background: linear-gradient(#f6f6f6, #ddd); color: #333; text-align: center; line-height: 27px; }
.select { height: 26px; border: 1px solid #999; background: linear-gradient(#f6f6f6, #dcdcdc); color: #000; display: flex; align-items: center; justify-content: space-between; padding: 0 8px 1px 7px; }
.radios { margin-top: 12px; padding-left: 14px; }
.radio { width: 19px; height: 19px; border: 1px solid #aaa; border-radius: 50%; background: linear-gradient(#f0f0f0, #d9d9d9); margin: 0 11px 10px 0; }
.radio.on { background: radial-gradient(circle, #666 4.500px, #e8e8e8 5px); }
.portrait { margin-right: 16px; }
.actions { height: 106px; padding-top: 19px; display: flex; flex-direction: column; gap: 3px; }
.btn { height: 32px; border: 1px solid #999; background: linear-gradient(#f6f6f6, #dcdcdc); color: #000; text-align: center; line-height: 28px; }
```
